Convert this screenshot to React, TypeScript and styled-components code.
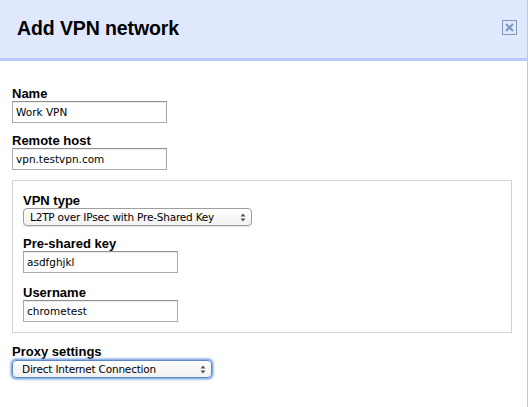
import React from "react";
import styled, { createGlobalStyle } from "styled-components";

const Global = createGlobalStyle`
  html, body { margin: 0; padding: 0; background: #ffffff; }
  body { font-family: "Liberation Sans", Arial, sans-serif; }
`;

const Dialog = styled.div`
  width: 528px;
  height: 407px;
  box-sizing: border-box;
  border-right: 1px solid #bcc4f5;
  background: #ffffff;
  display: flex;
  flex-direction: column;
`;

const Header = styled.div`
  height: 58px;
  background: #e0e8fe;
  border-bottom: 3px solid #b9c9fb;
  display: flex;
  align-items: center;
  justify-content: space-between;
  padding: 0 10px 0 17px;
`;

const Title = styled.h1`
  margin: 0;
  padding-bottom: 2px;
  font-family: "Liberation Sans", Arial, sans-serif;
  font-weight: bold;
  font-size: 19.5px;
  letter-spacing: -0.1px;
  color: #000;
`;

const CloseButton = styled.button`
  width: 15px;
  height: 15px;
  padding: 0;
  margin: 0 0 4px 0;
  box-sizing: border-box;
  border: 1px solid #7f9bba;
  background: transparent;
  display: flex;
  align-items: center;
  justify-content: center;
`;

const Body = styled.div`
  padding: 26px 0 0 12px;
  display: flex;
  flex-direction: column;
  align-items: flex-start;
`;

const Field = styled.div<{ $gap?: number }>`
  display: flex;
  flex-direction: column;
  align-items: flex-start;
  margin-bottom: ${(p) => (p.$gap ?? 11)}px;
`;

const Label = styled.label`
  font-family: "Liberation Sans", Arial, sans-serif;
  font-weight: bold;
  font-size: 13px;
  line-height: 14px;
  color: #000;
`;

const TextInput = styled.input`
  width: 155px;
  height: 22px;
  box-sizing: border-box;
  margin: 0;
  padding: 0 0 0 3px;
  border: 1px solid #aaaaaa;
  border-top-color: #8f8f8f;
  box-shadow: inset 0 1px 1px rgba(0, 0, 0, 0.08);
  font-family: "DejaVu Sans", "Lucida Grande", sans-serif;
  font-size: 10.5px;
  color: #000;
  background: #fff;
  outline: none;
`;

const Group = styled.div`
  width: 500px;
  box-sizing: border-box;
  border: 1px solid #d2d2d2;
  padding: 13px 10px 0 10px;
  margin-bottom: 12px;
`;

const SelectBox = styled.div<{ $width: number; $focused?: boolean }>`
  width: ${(p) => p.$width}px;
  height: 18px;
  margin-top: ${(p) => (p.$focused ? 1 : 0)}px;
  box-sizing: border-box;
  border: 1px solid ${(p) => (p.$focused ? "#5e88cc" : "#9e9e9e")};
  border-radius: 4px;
  background: linear-gradient(#ffffff, #f1f1f1);
  box-shadow: ${(p) =>
    p.$focused
      ? "0 0 0 1px #8fb2e6, 0 0 2px 2px rgba(110,150,220,0.55)"
      : "0 1px 1px rgba(0,0,0,0.12)"};
  display: flex;
  align-items: center;
  justify-content: space-between;
  padding: 0 5px 0 ${(p) => (p.$focused ? 9 : 6)}px;
  font-family: "DejaVu Sans", "Lucida Grande", sans-serif;
  font-size: 10.5px;
  letter-spacing: -0.2px;
  color: #000;
  white-space: nowrap;
`;

const Arrows = () => (
  <svg width="6" height="9" viewBox="0 0 6 9">
    <polygon points="3,0.5 5.5,3.5 0.5,3.5" fill="#555" />
    <polygon points="3,8.5 5.5,5.5 0.5,5.5" fill="#555" />
  </svg>
);

const Select = ({ width, value, focused }: { width: number; value: string; focused?: boolean }) => (
  <SelectBox $width={width} $focused={focused}>
    <span>{value}</span>
    <Arrows />
  </SelectBox>
);

export default function App() {
  return (
    <>
      <Global />
      <Dialog>
        <Header>
          <Title>Add VPN network</Title>
          <CloseButton aria-label="Close">
            <svg width="11" height="11" viewBox="0 0 11 11">
              <path d="M2 2 L9 9 M9 2 L2 9" stroke="#7b98b9" strokeWidth="2" />
            </svg>
          </CloseButton>
        </Header>
        <Body>
          <Field>
            <Label>Name</Label>
            <TextInput defaultValue="Work VPN" />
          </Field>
          <Field $gap={10}>
            <Label>Remote host</Label>
            <TextInput defaultValue="vpn.testvpn.com" />
          </Field>
          <Group>
            <Field $gap={11}>
              <Label>VPN type</Label>
              <Select width={229} value="L2TP over IPsec with Pre-Shared Key" />
            </Field>
            <Field $gap={13}>
              <Label>Pre-shared key</Label>
              <TextInput defaultValue="asdfghjkl" />
            </Field>
            <Field $gap={10}>
              <Label>Username</Label>
              <TextInput defaultValue="chrometest" />
            </Field>
          </Group>
          <Field>
            <Label>Proxy settings</Label>
            <Select width={200} value="Direct Internet Connection" focused />
          </Field>
        </Body>
      </Dialog>
    </>
  );
}
